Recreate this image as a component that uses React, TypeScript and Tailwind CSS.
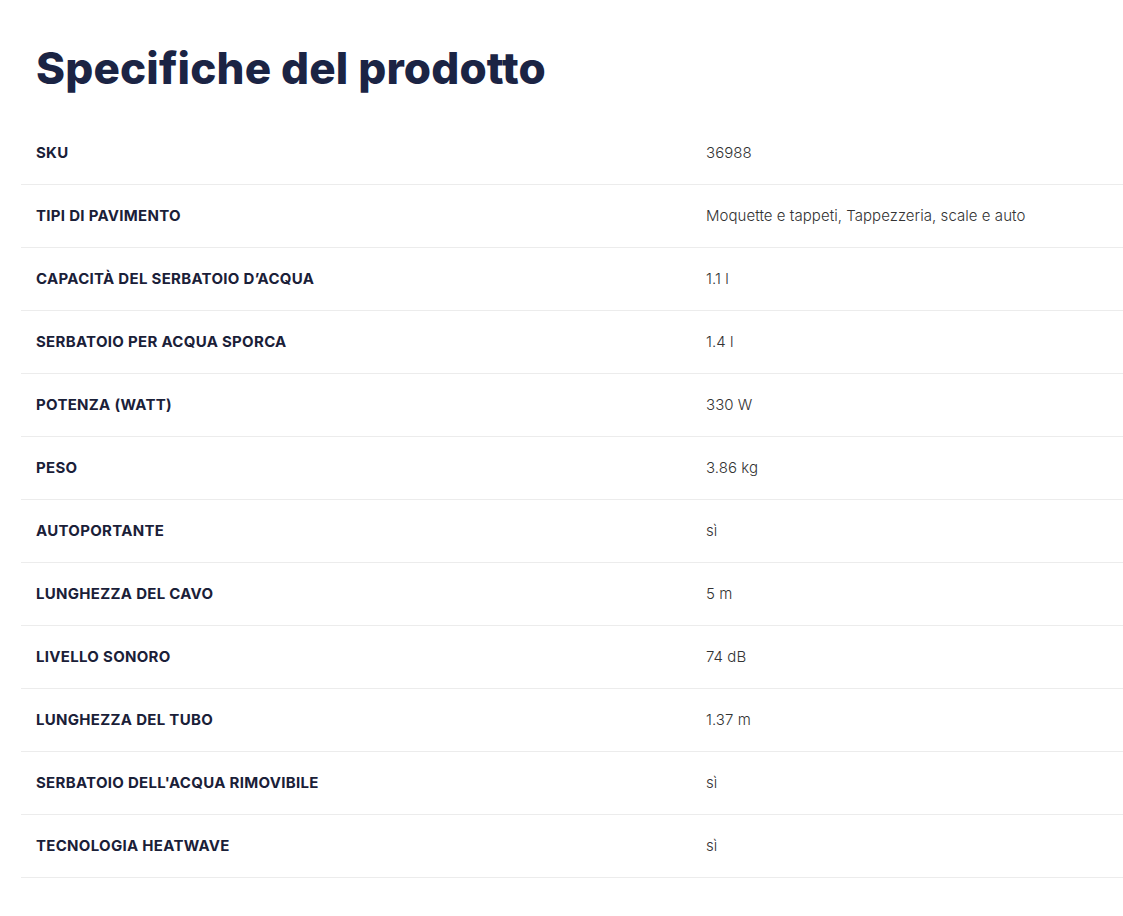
import React from 'react';

const specs: [string, string][] = [
  ['SKU', '36988'],
  ['TIPI DI PAVIMENTO', 'Moquette e tappeti, Tappezzeria, scale e auto'],
  ['CAPACITÀ DEL SERBATOIO D’ACQUA', '1.1 l'],
  ['SERBATOIO PER ACQUA SPORCA', '1.4 l'],
  ['POTENZA (WATT)', '330 W'],
  ['PESO', '3.86 kg'],
  ['AUTOPORTANTE', 'sì'],
  ['LUNGHEZZA DEL CAVO', '5 m'],
  ['LIVELLO SONORO', '74 dB'],
  ['LUNGHEZZA DEL TUBO', '1.37 m'],
  ["SERBATOIO DELL'ACQUA RIMOVIBILE", 'sì'],
  ['TECNOLOGIA HEATWAVE', 'sì'],
];

export default function App() {
  return (
    <div className="min-h-[916px] bg-white pl-[21px] pt-[40px] font-['Inter',sans-serif]">
      {/* Heading */}
      <h1 className="pl-[15px] text-[44px] font-extrabold leading-[56px] tracking-[0.15px] text-[#1b2444]">
        Specifiche del prodotto
      </h1>

      {/* Spec table */}
      <div className="mt-[26px]">
        {specs.map(([label, value]) => (
          <div
            key={label}
            className="grid h-[63px] grid-cols-[670px_1fr] items-center border-b border-[#ececec] px-[15px]"
          >
            <span className="text-[15px] font-bold tracking-[0.3px] text-[#1a2038]">{label}</span>
            <span className="text-[15px] font-light tracking-[0.05px] text-[#333]">{value}</span>
          </div>
        ))}
      </div>
    </div>
  );
}
